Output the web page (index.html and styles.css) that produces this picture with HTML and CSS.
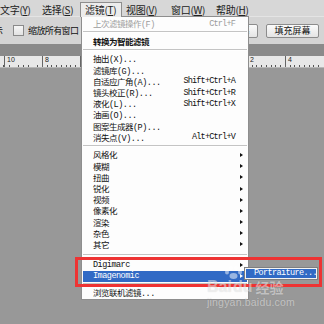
FILE: index.html
```html
<!DOCTYPE html>
<html lang="zh-CN">
<head>
    <meta charset="UTF-8">
    <title>滤镜菜单</title>
    <link rel="stylesheet" href="styles.css">
</head>

<body>
<div class="app">

    <!-- Menu bar -->
    <div class="menubar">
        <span class="mi">文字(<u>Y</u>)</span>
        <span class="mi">选择(<u>S</u>)</span>
        <span class="mi active">滤镜(<u>T</u>)</span>
        <span class="mi wide">视图(<u>V</u>)</span>
        <span class="mi wide">窗口(<u>W</u>)</span>
        <span class="mi">帮助(<u>H</u>)</span>
    </div>

    <!-- Tool options -->
    <div class="options">
        <span class="cut-label">显示</span>
        <span class="check"></span>
        <span class="opt-label">缩放所有窗口</span>
        <div class="opt-buttons">
            <button class="opt-btn">适合屏幕</button>
            <button class="opt-btn">填充屏幕</button>
        </div>
    </div>

    <div class="tabs"></div>

    <!-- Ruler -->
    <div class="ruler">
        <span class="ruler-pad"></span>
        <span class="seg">10</span>
        <span class="seg">8</span>
        <span class="seg">6</span>
        <span class="seg">4</span>
        <span class="seg">2</span>
        <span class="seg zero">0</span>
        <span class="seg">2</span>
        <span class="seg">4</span>
    </div>

    <div class="canvas"></div>

    <!-- Filter dropdown -->
    <div class="menu">
        <div class="item disabled"><span class="label">上次滤镜操作(F)</span><span class="sc">Ctrl+F</span><span class="arrow-col"></span></div>
        <div class="sep"></div>
        <div class="item"><span class="label strong">转换为智能滤镜</span><span class="arrow-col"></span></div>
        <div class="sep"></div>
        <div class="item"><span class="label">抽出(X)...</span><span class="arrow-col"></span></div>
        <div class="item"><span class="label">滤镜库(G)...</span><span class="arrow-col"></span></div>
        <div class="item"><span class="label">自适应广角(A)...</span><span class="sc">Shift+Ctrl+A</span><span class="arrow-col"></span></div>
        <div class="item"><span class="label">镜头校正(R)...</span><span class="sc">Shift+Ctrl+R</span><span class="arrow-col"></span></div>
        <div class="item"><span class="label">液化(L)...</span><span class="sc">Shift+Ctrl+X</span><span class="arrow-col"></span></div>
        <div class="item"><span class="label">油画(O)...</span><span class="arrow-col"></span></div>
        <div class="item"><span class="label">图案生成器(P)...</span><span class="arrow-col"></span></div>
        <div class="item"><span class="label">消失点(V)...</span><span class="sc">Alt+Ctrl+V</span><span class="arrow-col"></span></div>
        <div class="sep"></div>
        <div class="item"><span class="label">风格化</span><span class="arrow-col"><i class="arrow"></i></span></div>
        <div class="item"><span class="label">模糊</span><span class="arrow-col"><i class="arrow"></i></span></div>
        <div class="item"><span class="label">扭曲</span><span class="arrow-col"><i class="arrow"></i></span></div>
        <div class="item"><span class="label">锐化</span><span class="arrow-col"><i class="arrow"></i></span></div>
        <div class="item"><span class="label">视频</span><span class="arrow-col"><i class="arrow"></i></span></div>
        <div class="item"><span class="label">像素化</span><span class="arrow-col"><i class="arrow"></i></span></div>
        <div class="item"><span class="label">渲染</span><span class="arrow-col"><i class="arrow"></i></span></div>
        <div class="item"><span class="label">杂色</span><span class="arrow-col"><i class="arrow"></i></span></div>
        <div class="item"><span class="label">其它</span><span class="arrow-col"><i class="arrow"></i></span></div>
        <div class="sep big"></div>
        <div class="item"><span class="label">Digimarc</span><span class="arrow-col"><i class="arrow"></i></span></div>
        <div class="item hot"><span class="label">Imagenomic</span><span class="arrow-col"><i class="arrow"></i></span></div>
        <div class="sep small"></div>
        <div class="item"><span class="label">浏览联机滤镜...</span><span class="arrow-col"></span></div>
    </div>

    <!-- Imagenomic submenu -->
    <div class="submenu">
        <div class="sub-item">Portraiture...</div>
    </div>

    <!-- Red annotation box -->
    <div class="mark"></div>

    <!-- Watermark -->
    <div class="watermark">
        <div class="wm-top">
            <span class="wm-bai">Bai</span>
            <span class="wm-du">
                <svg class="paw" width="20" height="14" viewBox="0 0 20 14">
                    <ellipse cx="4" cy="7" rx="2" ry="2.6"/>
                    <ellipse cx="8" cy="3" rx="2" ry="2.6"/>
                    <ellipse cx="13" cy="3" rx="2" ry="2.6"/>
                    <ellipse cx="17" cy="7" rx="2" ry="2.6"/>
                    <ellipse cx="10.5" cy="11" rx="4" ry="3"/>
                </svg>
                du
            </span>
            <span class="wm-cn">经验</span>
        </div>
        <div class="wm-url">jingyan.baidu.com</div>
    </div>

</div>
</body>
</html>
```

FILE: styles.css
```css
/*
==========================
= Page and app container =
==========================
*/
body {
    margin: 0;
    font-family: "Noto Sans CJK SC", "Noto Sans", sans-serif;
}

.app {
    position: relative;
    width: 324px;
    height: 324px;
    overflow: hidden;
    display: flex;
    flex-direction: column;
    background: #989898;
}

/*
=============
= Menu bar  =
=============
*/
.menubar {
    height: 16px;
    display: flex;
    align-items: flex-end;
    margin-left: -4px;
    background: #d7d7d7;
    font-size: 10px;
    color: #222;
}

.menubar .mi {
    width: 42px;
    flex: none;
    box-sizing: border-box;
    height: 14px;
    line-height: 13px;
    padding: 0 3px;
    border: 1px solid transparent;
    border-bottom: 0;
    white-space: nowrap;
    letter-spacing: -0.3px;
}

.menubar .mi.wide {
    width: 45px;
}

.menubar .mi.active {
    position: relative;
    z-index: 3;
    padding-left: 4px;
    background: #ececec;
    border-color: #8e8e8e;
    height: 15px;
    margin-bottom: -1px;
}

/*
================
= Options bar  =
================
*/
.options {
    height: 28px;
    display: flex;
    align-items: center;
    background: #d4d4d4;
    border-top: 1px solid #e4e4e4;
    box-sizing: border-box;
    font-size: 9px;
    color: #111;
}

.cut-label {
    margin-left: -15px;
    width: 18px;
    overflow: hidden;
    white-space: nowrap;
}

.check {
    width: 9px;
    height: 9px;
    margin-left: 10px;
    margin-right: 4px;
    border: 1px solid #8a8a8a;
    background: linear-gradient(#f6f6f6, #e2e2e2);
}

.opt-label {
    letter-spacing: -0.6px;
}

.opt-buttons {
    margin-left: auto;
    display: flex;
    gap: 8px;
    padding-right: 5px;
}

.opt-btn {
    height: 14px;
    width: 53px;
    padding: 0;
    font: inherit;
    font-size: 9px;
    line-height: 12px;
    color: #111;
    border: 1px solid #8c8c8c;
    border-radius: 2px;
    background: linear-gradient(#fbfbfb, #e4e4e4);
}

/*
======================
= Tabs, ruler, canvas =
======================
*/
.tabs {
    height: 12px;
    background: #8a8a8a;
}

.ruler {
    height: 11px;
    display: flex;
    background: #e8e8e8;
    border-bottom: 1px solid #b8b8b8;
    font-family: "Liberation Sans", sans-serif;
    font-size: 7px;
    color: #222;
}

.ruler-pad {
    width: 4px;
    flex: none;
    background: repeating-linear-gradient(90deg, transparent 0 3px, #555 3px 4px) bottom / 100% 2px no-repeat;
}

.ruler .seg {
    width: 38px;
    flex: none;
    box-sizing: border-box;
    padding-left: 2px;
    line-height: 8px;
    border-left: 1px solid #666;
    background:
        repeating-linear-gradient(90deg, transparent 0 3.75px, #555 3.75px 4.75px) bottom / 100% 2px no-repeat;
}

.ruler .seg.zero {
    width: 53px;
}

.canvas {
    flex: 1;
    background: #989898;
}

/*
==================
= Filter dropdown =
==================
*/
.menu {
    position: absolute;
    left: 81px;
    top: 16px;
    z-index: 2;
    width: 168px;
    box-sizing: border-box;
    padding: 1px;
    background: #fdfdfd;
    border: 1px solid #8e8e8e;
    font-family: "Liberation Mono", "Noto Sans CJK SC", monospace;
    font-size: 8.5px;
    color: #111;
}

.menu .item {
    height: 11.2px;
    display: flex;
    align-items: center;
    padding-left: 10px;
    white-space: nowrap;
}

.menu .label {
    flex: 1;
    letter-spacing: -0.5px;
}

.menu .label.strong {
    font-weight: bold;
}

.menu .sc {
    letter-spacing: -0.8px;
    font-size: 8.5px;
}

.menu .arrow-col {
    width: 12px;
    flex: none;
    display: flex;
    align-items: center;
    padding-left: 5px;
    box-sizing: border-box;
}

.menu .arrow {
    width: 0;
    height: 0;
    border-left: 3px solid #111;
    border-top: 2.5px solid transparent;
    border-bottom: 2.5px solid transparent;
}

.menu .item.disabled {
    color: #9c9c9c;
}

.menu .item.hot {
    background: #316ac5;
    color: #fff;
}

.menu .item.hot .arrow {
    border-left-color: #fff;
}

.menu .sep {
    height: 6.5px;
    display: flex;
    align-items: center;
}

.menu .sep.big {
    height: 9.5px;
}

.menu .sep.small {
    height: 5px;
}

.menu .sep::before {
    content: "";
    flex: 1;
    height: 1px;
    background: #c4c4c4;
    border-bottom: 1px solid #fff;
}

/*
============
= Submenu  =
============
*/
.submenu {
    position: absolute;
    left: 244px;
    top: 267px;
    z-index: 2;
    width: 74px;
    height: 13px;
    box-sizing: border-box;
    border: 1px solid #7e7e7e;
    background: #f4f4f4;
    padding: 1px;
}

.sub-item {
    height: 100%;
    background: #316ac5;
    color: #fff;
    font-family: "Liberation Mono", monospace;
    font-size: 8.5px;
    letter-spacing: -0.6px;
    line-height: 9px;
    padding-left: 8px;
    white-space: nowrap;
}

/*
=====================
= Annotation overlay =
=====================
*/
.mark {
    position: absolute;
    left: 75px;
    top: 257px;
    z-index: 4;
    width: 247px;
    height: 30px;
    box-sizing: border-box;
    border: 3px solid #ee3333;
}

.watermark {
    position: absolute;
    left: 207px;
    top: 265px;
    z-index: 5;
    color: rgba(255, 255, 255, 0.5);
    text-shadow: 0 0 1px rgba(0, 0, 0, 0.15);
}

.wm-top {
    display: flex;
    align-items: flex-end;
    height: 30px;
    font-family: "Liberation Sans", sans-serif;
    font-weight: bold;
    font-size: 16px;
    line-height: 16px;
}

.wm-du {
    position: relative;
    margin-left: 1px;
}

.paw {
    position: absolute;
    left: -10px;
    top: -14px;
    fill: rgba(255, 255, 255, 0.5);
}

.wm-cn {
    margin-left: 3px;
    font-family: "Noto Sans CJK SC", sans-serif;
    font-size: 14px;
}

.wm-url {
    margin-top: 1px;
    font-family: "Liberation Sans", sans-serif;
    font-size: 10.5px;
    letter-spacing: 0.2px;
}
```
